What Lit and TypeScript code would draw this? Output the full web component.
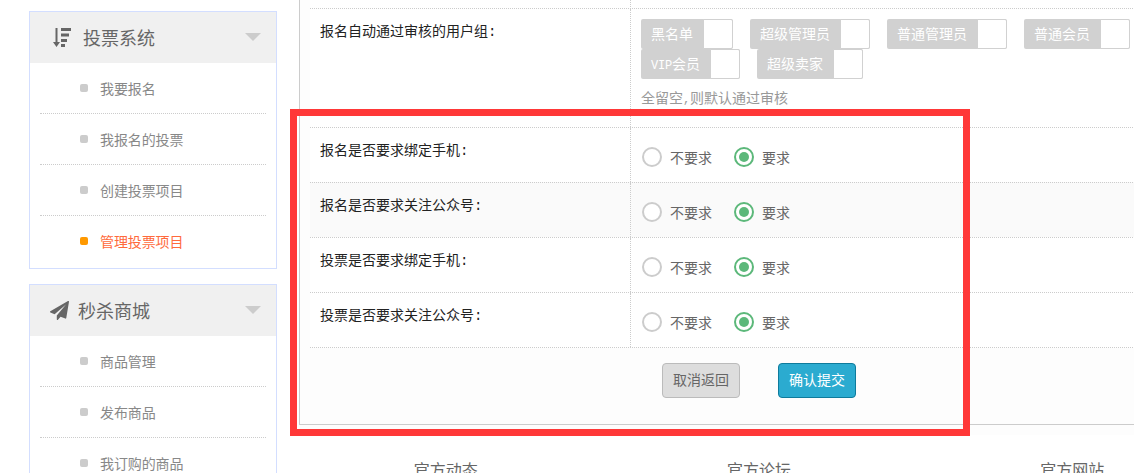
import { LitElement, html, css, svg } from 'lit';
import { customElement } from 'lit/decorators.js';
import { classMap } from 'lit/directives/class-map.js';

interface NavGroup {
  title: string;
  icon: 'sort' | 'plane';
  items: { text: string; active?: boolean }[];
}

const NAV_GROUPS: NavGroup[] = [
  {
    title: '投票系统',
    icon: 'sort',
    items: [
      { text: '我要报名' },
      { text: '我报名的投票' },
      { text: '创建投票项目' },
      { text: '管理投票项目', active: true },
    ],
  },
  {
    title: '秒杀商城',
    icon: 'plane',
    items: [{ text: '商品管理' }, { text: '发布商品' }, { text: '我订购的商品' }],
  },
];

const USER_GROUPS = ['黑名单', '超级管理员', '普通管理员', '普通会员', 'VIP会员', '超级卖家'];

const RADIO_ROWS = ['报名是否要求绑定手机:', '报名是否要求关注公众号:', '投票是否要求绑定手机:', '投票是否要求关注公众号:'];

const FOOTER_LINKS = ['官方动态', '官方论坛', '官方网站'];

const sortIcon = svg`
  <svg class="icon icon--sort" width="18" height="19" viewBox="0 0 18 19" fill="#666">
    <path d="M2.5 0h2v14h2.500l-3.500 5-3.500-5h2.500z" />
    <rect x="8" y="0" width="10" height="3" />
    <rect x="8" y="5.500" width="8" height="3" />
    <rect x="8" y="11" width="6" height="3" />
    <rect x="8" y="16" width="4" height="3" />
  </svg>
`;

const planeIcon = svg`
  <svg class="icon icon--plane" width="19" height="19" viewBox="0 0 1792 1792" fill="#666">
    <path d="M1764 11q33 24 27 64l-256 1536q-5 29-32 45-14 8-31 8-11 0-24-5l-453-185-242 295q-18 23-49 23-13 0-22-4-19-7-30.5-23.5t-11.5-36.5v-349l864-1059-1069 925-395-162q-37-14-40-55-2-40 32-59l1664-960q15-9 32-9 20 0 36 11z" />
  </svg>
`;

@customElement('app-root')
export class AppRoot extends LitElement {
  static styles = css`
    * {
      margin: 0;
      padding: 0;
      box-sizing: border-box;
    }

    :host {
      display: block;
      position: relative;
      width: 1134px;
      height: 473px;
      overflow: hidden;
      background: #fff;
      font-family: 'Liberation Mono', 'Noto Sans CJK SC', monospace;
      font-size: 14px;
      line-height: 20px;
    }

    .page {
      display: flex;
      align-items: flex-start;
      width: 1300px;
      padding-left: 29px;
    }

    .sidebar {
      display: flex;
      flex-direction: column;
      gap: 15px;
      flex: none;
      width: 248px;
      margin-top: 11px;
    }

    .nav {
      border: 1px solid #d3deff;
    }

    .nav__heading {
      display: flex;
      align-items: center;
      height: 51px;
      padding: 0 15px 1px 23px;
      background: #f0f0f0;
      color: #666;
      font-size: 18px;
    }

    .nav__heading--plane {
      padding-left: 20px;
    }

    .icon {
      flex: none;
    }

    .icon--sort {
      margin-right: 12px;
    }

    .icon--plane {
      margin-right: 9px;
    }

    .nav__title {
      flex: 1;
      font-family: 'Noto Sans CJK SC', sans-serif;
    }

    .nav__arrow {
      width: 0;
      height: 0;
      border-style: solid;
      border-width: 8px 8px 0;
      border-color: #ccc transparent transparent;
    }

    .nav__items {
      list-style: none;
      padding: 0 10px;
    }

    .nav__item {
      display: flex;
      align-items: center;
      gap: 12px;
      height: 51px;
      padding-left: 40px;
      border-bottom: 1px dotted #ccc;
      color: #888;
      font-family: 'Noto Sans CJK SC', sans-serif;
      letter-spacing: -0.1px;
    }

    .nav__item:last-child {
      height: 52px;
      padding-bottom: 2px;
      border-bottom: 0;
    }

    .nav__item--active {
      color: #ff6a3c;
    }

    .nav__dot {
      flex: none;
      width: 8px;
      height: 8px;
      border-radius: 2px;
      background: #ccc;
    }

    .nav__item--active .nav__dot {
      background: #f90;
    }

    .content {
      flex: none;
      width: 940px;
      margin-left: 12px;
    }

    .panel-wrap {
      margin-left: 10px;
      padding-bottom: 10px;
      background: #fdfdfd;
    }

    .panel {
      padding-left: 10px;
      border-left: 1px solid #ccc;
      border-bottom: 1px solid #ccc;
    }

    .row {
      display: grid;
      grid-template-columns: 321px 1fr;
      border-top: 1px dotted #ccc;
      background: #fff;
    }

    .row--stub {
      height: 8px;
      border-top: 0;
    }

    .row--shaded {
      background: #fafafa;
    }

    .row--last {
      border-bottom: 1px dotted #ccc;
    }

    .row__label {
      padding: 13px 0 0 10px;
      border-right: 1px dotted #ccc;
      color: #222;
    }

    .row__value {
      padding-left: 10px;
    }

    .row__value--radios {
      display: flex;
      height: 54px;
      padding: 19px 0 0 11px;
      color: #666;
    }

    .tags {
      display: flex;
      flex-wrap: wrap;
      width: 510px;
      padding-top: 10px;
    }

    .tag {
      display: flex;
      height: 30px;
      margin-right: 17px;
      border-radius: 2px;
      background: #d1d1d1;
      color: #fff;
      line-height: 32px;
    }

    .tag__text {
      padding: 0 10px;
    }

    .tag__box {
      width: 30px;
      height: 30px;
      border: 1px solid #d1d1d1;
      border-radius: 0 2px 2px 0;
      background: #fff;
    }

    .half {
      font-size: 12px;
      letter-spacing: -0.2px;
    }

    .hint {
      margin: 10px 0 17px;
      color: #999;
    }

    .radio {
      display: flex;
      align-items: flex-start;
      gap: 8px;
      margin-right: 22px;
      line-height: 24px;
    }

    .radio__mark {
      display: flex;
      align-items: center;
      justify-content: center;
      width: 20px;
      height: 20px;
      border: 2px solid #ccc;
      border-radius: 50%;
      background: #fff;
    }

    .radio--checked .radio__mark {
      border-color: #5cb87a;
    }

    .radio--checked .radio__mark::after {
      content: '';
      width: 10px;
      height: 10px;
      border-radius: 50%;
      background: #5cb87a;
    }

    .actions {
      display: flex;
      gap: 38px;
      padding: 15px 0 26px 352px;
    }

    .btn {
      width: 78px;
      height: 35px;
      border: 1px solid #bbb;
      border-radius: 4px;
      background: #ddd;
      color: #666;
      font: inherit;
    }

    .btn--primary {
      border-color: #0e7b9c;
      background: #2babd0;
      color: #fff;
    }

    .footer {
      display: grid;
      grid-template-columns: repeat(3, 1fr);
      padding-top: 23px;
      color: #666;
      font-family: 'Noto Sans CJK SC', sans-serif;
      font-size: 16px;
      line-height: 22px;
      text-align: center;
    }

    .annotation {
      position: absolute;
      left: 290px;
      top: 109px;
      width: 680px;
      height: 327px;
      border: 7px solid #ff3838;
      pointer-events: none;
    }
  `;

  renderNav(group: NavGroup) {
    const plane = group.icon === 'plane';
    return html`
      <section class="nav">
        <div class="nav__heading ${plane ? 'nav__heading--plane' : ''}">
          ${plane ? planeIcon : sortIcon}
          <span class="nav__title">${group.title}</span>
          <span class="nav__arrow"></span>
        </div>
        <ul class="nav__items">
          ${group.items.map(
            (item) => html`
              <li class=${classMap({ nav__item: true, 'nav__item--active': !!item.active })}>
                <span class="nav__dot"></span>${item.text}
              </li>
            `
          )}
        </ul>
      </section>
    `;
  }

  renderTag(name: string) {
    const text = name.startsWith('VIP') ? html`<span class="half">VIP</span>${name.slice(3)}` : name;
    return html`
      <div class="tag">
        <span class="tag__text">${text}</span>
        <span class="tag__box"></span>
      </div>
    `;
  }

  renderRadioRow(label: string, index: number) {
    const rowClasses = classMap({
      row: true,
      'row--shaded': index === 1,
      'row--last': index === RADIO_ROWS.length - 1,
    });
    return html`
      <div class=${rowClasses}>
        <div class="row__label">${label}</div>
        <div class="row__value row__value--radios">
          <label class="radio"><span class="radio__mark"></span>不要求</label>
          <label class="radio radio--checked"><span class="radio__mark"></span>要求</label>
        </div>
      </div>
    `;
  }

  render() {
    return html`
      <div class="page">
        <aside class="sidebar">${NAV_GROUPS.map((group) => this.renderNav(group))}</aside>
        <main class="content">
          <div class="panel-wrap">
            <div class="panel">
              <div class="row row--stub">
                <div class="row__label"></div>
              </div>
              <div class="row">
                <div class="row__label">报名自动通过审核的用户组:</div>
                <div class="row__value">
                  <div class="tags">${USER_GROUPS.map((name) => this.renderTag(name))}</div>
                  <p class="hint">全留空<span class="half">,</span>则默认通过审核</p>
                </div>
              </div>
              ${RADIO_ROWS.map((label, index) => this.renderRadioRow(label, index))}
              <div class="actions">
                <button class="btn">取消返回</button>
                <button class="btn btn--primary">确认提交</button>
              </div>
            </div>
          </div>
          <footer class="footer">${FOOTER_LINKS.map((link) => html`<span>${link}</span>`)}</footer>
        </main>
      </div>
      <div class="annotation"></div>
    `;
  }
}
